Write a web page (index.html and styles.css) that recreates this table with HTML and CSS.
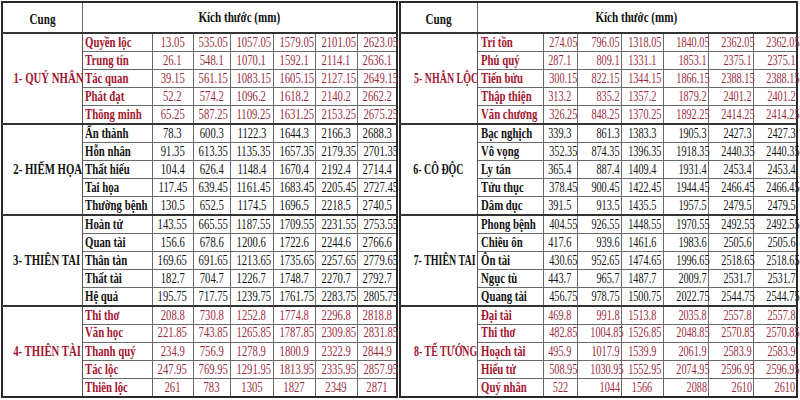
FILE: index.html
```html
<!DOCTYPE html>
<html lang="vi">
<head>
<meta charset="utf-8">
<title>Kích thước Lỗ Ban</title>
<link rel="stylesheet" href="styles.css">
</head>
<body>
<div class="sheet">
  <table class="tbl tbl-left">
    <colgroup>
      <col class="c-cung-l"><col class="c-name-l"><col class="c-n1-l"><col class="c-n2-l"><col class="c-n3-l"><col class="c-n4-l"><col class="c-n5-l"><col class="c-n6-l">
    </colgroup>
    <thead>
      <tr class="head">
        <th class="h-cung"><span class="t">Cung</span></th>
        <th class="h-size" colspan="7"><span class="t">Kích thước (mm)</span></th>
      </tr>
    </thead>
    <tbody class="grp red">
      <tr><td class="cung" rowspan="5"><span class="t">1- QUÝ NHÂN</span></td><td class="name"><span class="t">Quyền lộc</span></td><td><span class="t">13.05</span></td><td><span class="t">535.05</span></td><td><span class="t">1057.05</span></td><td><span class="t">1579.05</span></td><td><span class="t">2101.05</span></td><td><span class="t">2623.05</span></td></tr>
      <tr><td class="name"><span class="t">Trung tín</span></td><td><span class="t">26.1</span></td><td><span class="t">548.1</span></td><td><span class="t">1070.1</span></td><td><span class="t">1592.1</span></td><td><span class="t">2114.1</span></td><td><span class="t">2636.1</span></td></tr>
      <tr><td class="name"><span class="t">Tác quan</span></td><td><span class="t">39.15</span></td><td><span class="t">561.15</span></td><td><span class="t">1083.15</span></td><td><span class="t">1605.15</span></td><td><span class="t">2127.15</span></td><td><span class="t">2649.15</span></td></tr>
      <tr><td class="name"><span class="t">Phát đạt</span></td><td><span class="t">52.2</span></td><td><span class="t">574.2</span></td><td><span class="t">1096.2</span></td><td><span class="t">1618.2</span></td><td><span class="t">2140.2</span></td><td><span class="t">2662.2</span></td></tr>
      <tr><td class="name"><span class="t">Thông minh</span></td><td><span class="t">65.25</span></td><td><span class="t">587.25</span></td><td><span class="t">1109.25</span></td><td><span class="t">1631.25</span></td><td><span class="t">2153.25</span></td><td><span class="t">2675.25</span></td></tr>
    </tbody>
    <tbody class="grp">
      <tr><td class="cung" rowspan="5"><span class="t">2- HIẾM HỌA</span></td><td class="name"><span class="t">Ấn thành</span></td><td><span class="t">78.3</span></td><td><span class="t">600.3</span></td><td><span class="t">1122.3</span></td><td><span class="t">1644.3</span></td><td><span class="t">2166.3</span></td><td><span class="t">2688.3</span></td></tr>
      <tr><td class="name"><span class="t">Hỗn nhân</span></td><td><span class="t">91.35</span></td><td><span class="t">613.35</span></td><td><span class="t">1135.35</span></td><td><span class="t">1657.35</span></td><td><span class="t">2179.35</span></td><td><span class="t">2701.35</span></td></tr>
      <tr><td class="name"><span class="t">Thất hiếu</span></td><td><span class="t">104.4</span></td><td><span class="t">626.4</span></td><td><span class="t">1148.4</span></td><td><span class="t">1670.4</span></td><td><span class="t">2192.4</span></td><td><span class="t">2714.4</span></td></tr>
      <tr><td class="name"><span class="t">Tai họa</span></td><td><span class="t">117.45</span></td><td><span class="t">639.45</span></td><td><span class="t">1161.45</span></td><td><span class="t">1683.45</span></td><td><span class="t">2205.45</span></td><td><span class="t">2727.45</span></td></tr>
      <tr><td class="name"><span class="t">Thường bệnh</span></td><td><span class="t">130.5</span></td><td><span class="t">652.5</span></td><td><span class="t">1174.5</span></td><td><span class="t">1696.5</span></td><td><span class="t">2218.5</span></td><td><span class="t">2740.5</span></td></tr>
    </tbody>
    <tbody class="grp">
      <tr><td class="cung" rowspan="5"><span class="t">3- THIÊN TAI</span></td><td class="name"><span class="t">Hoàn tử</span></td><td><span class="t">143.55</span></td><td><span class="t">665.55</span></td><td><span class="t">1187.55</span></td><td><span class="t">1709.55</span></td><td><span class="t">2231.55</span></td><td><span class="t">2753.55</span></td></tr>
      <tr><td class="name"><span class="t">Quan tài</span></td><td><span class="t">156.6</span></td><td><span class="t">678.6</span></td><td><span class="t">1200.6</span></td><td><span class="t">1722.6</span></td><td><span class="t">2244.6</span></td><td><span class="t">2766.6</span></td></tr>
      <tr><td class="name"><span class="t">Thân tàn</span></td><td><span class="t">169.65</span></td><td><span class="t">691.65</span></td><td><span class="t">1213.65</span></td><td><span class="t">1735.65</span></td><td><span class="t">2257.65</span></td><td><span class="t">2779.65</span></td></tr>
      <tr><td class="name"><span class="t">Thất tài</span></td><td><span class="t">182.7</span></td><td><span class="t">704.7</span></td><td><span class="t">1226.7</span></td><td><span class="t">1748.7</span></td><td><span class="t">2270.7</span></td><td><span class="t">2792.7</span></td></tr>
      <tr><td class="name"><span class="t">Hệ quả</span></td><td><span class="t">195.75</span></td><td><span class="t">717.75</span></td><td><span class="t">1239.75</span></td><td><span class="t">1761.75</span></td><td><span class="t">2283.75</span></td><td><span class="t">2805.75</span></td></tr>
    </tbody>
    <tbody class="grp red">
      <tr><td class="cung" rowspan="5"><span class="t">4- THIÊN TÀI</span></td><td class="name"><span class="t">Thi thơ</span></td><td><span class="t">208.8</span></td><td><span class="t">730.8</span></td><td><span class="t">1252.8</span></td><td><span class="t">1774.8</span></td><td><span class="t">2296.8</span></td><td><span class="t">2818.8</span></td></tr>
      <tr><td class="name"><span class="t">Văn học</span></td><td><span class="t">221.85</span></td><td><span class="t">743.85</span></td><td><span class="t">1265.85</span></td><td><span class="t">1787.85</span></td><td><span class="t">2309.85</span></td><td><span class="t">2831.85</span></td></tr>
      <tr><td class="name"><span class="t">Thanh quý</span></td><td><span class="t">234.9</span></td><td><span class="t">756.9</span></td><td><span class="t">1278.9</span></td><td><span class="t">1800.9</span></td><td><span class="t">2322.9</span></td><td><span class="t">2844.9</span></td></tr>
      <tr><td class="name"><span class="t">Tác lộc</span></td><td><span class="t">247.95</span></td><td><span class="t">769.95</span></td><td><span class="t">1291.95</span></td><td><span class="t">1813.95</span></td><td><span class="t">2335.95</span></td><td><span class="t">2857.95</span></td></tr>
      <tr><td class="name"><span class="t">Thiên lộc</span></td><td><span class="t">261</span></td><td><span class="t">783</span></td><td><span class="t">1305</span></td><td><span class="t">1827</span></td><td><span class="t">2349</span></td><td><span class="t">2871</span></td></tr>
    </tbody>
  </table>

  <table class="tbl tbl-right">
    <colgroup>
      <col class="c-cung-r"><col class="c-name-r"><col class="c-n1-r"><col class="c-n2-r"><col class="c-n3-r"><col class="c-n4-r"><col class="c-n5-r"><col class="c-n6-r">
    </colgroup>
    <thead>
      <tr class="head">
        <th class="h-cung"><span class="t">Cung</span></th>
        <th class="h-size" colspan="7"><span class="t">Kích thước (mm)</span></th>
      </tr>
    </thead>
    <tbody class="grp red">
      <tr><td class="cung" rowspan="5"><span class="t">5- NHÂN LỘC</span></td><td class="name"><span class="t">Trí tồn</span></td><td><span class="t">274.05</span></td><td class="r"><span class="t">796.05</span></td><td><span class="t">1318.05</span></td><td class="r"><span class="t">1840.05</span></td><td class="r"><span class="t">2362.05</span></td><td class="r"><span class="t">2362.05</span></td></tr>
      <tr><td class="name"><span class="t">Phú quý</span></td><td><span class="t">287.1</span></td><td class="r"><span class="t">809.1</span></td><td><span class="t">1331.1</span></td><td class="r"><span class="t">1853.1</span></td><td class="r"><span class="t">2375.1</span></td><td class="r"><span class="t">2375.1</span></td></tr>
      <tr><td class="name"><span class="t">Tiến bửu</span></td><td><span class="t">300.15</span></td><td class="r"><span class="t">822.15</span></td><td><span class="t">1344.15</span></td><td class="r"><span class="t">1866.15</span></td><td class="r"><span class="t">2388.15</span></td><td class="r"><span class="t">2388.15</span></td></tr>
      <tr><td class="name"><span class="t">Thập thiện</span></td><td><span class="t">313.2</span></td><td class="r"><span class="t">835.2</span></td><td><span class="t">1357.2</span></td><td class="r"><span class="t">1879.2</span></td><td class="r"><span class="t">2401.2</span></td><td class="r"><span class="t">2401.2</span></td></tr>
      <tr><td class="name"><span class="t">Văn chương</span></td><td><span class="t">326.25</span></td><td class="r"><span class="t">848.25</span></td><td><span class="t">1370.25</span></td><td class="r"><span class="t">1892.25</span></td><td class="r"><span class="t">2414.25</span></td><td class="r"><span class="t">2414.25</span></td></tr>
    </tbody>
    <tbody class="grp">
      <tr><td class="cung" rowspan="5"><span class="t">6- CÔ ĐỘC</span></td><td class="name"><span class="t">Bạc nghịch</span></td><td><span class="t">339.3</span></td><td class="r"><span class="t">861.3</span></td><td><span class="t">1383.3</span></td><td class="r"><span class="t">1905.3</span></td><td class="r"><span class="t">2427.3</span></td><td class="r"><span class="t">2427.3</span></td></tr>
      <tr><td class="name"><span class="t">Vô vọng</span></td><td><span class="t">352.35</span></td><td class="r"><span class="t">874.35</span></td><td><span class="t">1396.35</span></td><td class="r"><span class="t">1918.35</span></td><td class="r"><span class="t">2440.35</span></td><td class="r"><span class="t">2440.35</span></td></tr>
      <tr><td class="name"><span class="t">Ly tán</span></td><td><span class="t">365.4</span></td><td class="r"><span class="t">887.4</span></td><td><span class="t">1409.4</span></td><td class="r"><span class="t">1931.4</span></td><td class="r"><span class="t">2453.4</span></td><td class="r"><span class="t">2453.4</span></td></tr>
      <tr><td class="name"><span class="t">Tửu thục</span></td><td><span class="t">378.45</span></td><td class="r"><span class="t">900.45</span></td><td><span class="t">1422.45</span></td><td class="r"><span class="t">1944.45</span></td><td class="r"><span class="t">2466.45</span></td><td class="r"><span class="t">2466.45</span></td></tr>
      <tr><td class="name"><span class="t">Dâm dục</span></td><td><span class="t">391.5</span></td><td class="r"><span class="t">913.5</span></td><td><span class="t">1435.5</span></td><td class="r"><span class="t">1957.5</span></td><td class="r"><span class="t">2479.5</span></td><td class="r"><span class="t">2479.5</span></td></tr>
    </tbody>
    <tbody class="grp">
      <tr><td class="cung" rowspan="5"><span class="t">7- THIÊN TAI</span></td><td class="name"><span class="t">Phong bệnh</span></td><td><span class="t">404.55</span></td><td class="r"><span class="t">926.55</span></td><td><span class="t">1448.55</span></td><td class="r"><span class="t">1970.55</span></td><td class="r"><span class="t">2492.55</span></td><td class="r"><span class="t">2492.55</span></td></tr>
      <tr><td class="name"><span class="t">Chiêu ôn</span></td><td><span class="t">417.6</span></td><td class="r"><span class="t">939.6</span></td><td><span class="t">1461.6</span></td><td class="r"><span class="t">1983.6</span></td><td class="r"><span class="t">2505.6</span></td><td class="r"><span class="t">2505.6</span></td></tr>
      <tr><td class="name"><span class="t">Ôn tài</span></td><td><span class="t">430.65</span></td><td class="r"><span class="t">952.65</span></td><td><span class="t">1474.65</span></td><td class="r"><span class="t">1996.65</span></td><td class="r"><span class="t">2518.65</span></td><td class="r"><span class="t">2518.65</span></td></tr>
      <tr><td class="name"><span class="t">Ngục tù</span></td><td><span class="t">443.7</span></td><td class="r"><span class="t">965.7</span></td><td><span class="t">1487.7</span></td><td class="r"><span class="t">2009.7</span></td><td class="r"><span class="t">2531.7</span></td><td class="r"><span class="t">2531.7</span></td></tr>
      <tr><td class="name"><span class="t">Quang tài</span></td><td><span class="t">456.75</span></td><td class="r"><span class="t">978.75</span></td><td><span class="t">1500.75</span></td><td class="r"><span class="t">2022.75</span></td><td class="r"><span class="t">2544.75</span></td><td class="r"><span class="t">2544.75</span></td></tr>
    </tbody>
    <tbody class="grp red">
      <tr><td class="cung" rowspan="5"><span class="t">8- TỂ TƯỚNG</span></td><td class="name"><span class="t">Đại tài</span></td><td><span class="t">469.8</span></td><td class="r"><span class="t">991.8</span></td><td><span class="t">1513.8</span></td><td class="r"><span class="t">2035.8</span></td><td class="r"><span class="t">2557.8</span></td><td class="r"><span class="t">2557.8</span></td></tr>
      <tr><td class="name"><span class="t">Thi thơ</span></td><td><span class="t">482.85</span></td><td class="r"><span class="t">1004.85</span></td><td><span class="t">1526.85</span></td><td class="r"><span class="t">2048.85</span></td><td class="r"><span class="t">2570.85</span></td><td class="r"><span class="t">2570.85</span></td></tr>
      <tr><td class="name"><span class="t">Hoạch tài</span></td><td><span class="t">495.9</span></td><td class="r"><span class="t">1017.9</span></td><td><span class="t">1539.9</span></td><td class="r"><span class="t">2061.9</span></td><td class="r"><span class="t">2583.9</span></td><td class="r"><span class="t">2583.9</span></td></tr>
      <tr><td class="name"><span class="t">Hiếu tử</span></td><td><span class="t">508.95</span></td><td class="r"><span class="t">1030.95</span></td><td><span class="t">1552.95</span></td><td class="r"><span class="t">2074.95</span></td><td class="r"><span class="t">2596.95</span></td><td class="r"><span class="t">2596.95</span></td></tr>
      <tr><td class="name"><span class="t">Quý nhân</span></td><td><span class="t">522</span></td><td class="r"><span class="t">1044</span></td><td><span class="t">1566</span></td><td class="r"><span class="t">2088</span></td><td class="r"><span class="t">2610</span></td><td class="r"><span class="t">2610</span></td></tr>
    </tbody>
  </table>
</div>
</body>
</html>
```

FILE: styles.css
```css
html, body {
  margin: 0;
  padding: 0;
  background: #ffffff;
}

body {
  font-family: "Liberation Serif", "Times New Roman", serif;
  color: #111111;
  width: 800px;
  height: 400px;
  overflow: hidden;
}

.sheet {
  display: flex;
  align-items: flex-start;
  padding: 1px 2px 0 1px;
}

.tbl {
  border-collapse: collapse;
  table-layout: fixed;
  border: 2px solid #2a2a2a;
  background: #ffffff;
  font-family: "Liberation Serif", "Times New Roman", serif;
}

.tbl-left { width: 397px; }
.tbl-right { width: 399px; margin-left: 1px; }

.c-cung-l { width: 80px; }
.c-name-l { width: 70px; }
.c-n1-l { width: 41px; }
.c-n2-l { width: 37px; }
.c-n3-l { width: 43px; }
.c-n4-l { width: 42px; }
.c-n5-l { width: 42px; }
.c-n6-l { width: 40px; }

.c-cung-r { width: 77px; }
.c-name-r { width: 66px; }
.c-n1-r { width: 34px; }
.c-n2-r { width: 44px; }
.c-n3-r { width: 42px; }
.c-n4-r { width: 45px; }
.c-n5-r { width: 45px; }
.c-n6-r { width: 44px; }

th, td {
  border: 1px solid #6a6a6a;
  padding: 0;
  white-space: nowrap;
  overflow: visible;
  line-height: 12px;
}

.head {
  height: 31px;
}

.head th {
  font-size: 15px;
  font-weight: bold;
  color: #111111;
  border-bottom: 2px solid #333333;
}

.h-cung {
  text-align: center;
  vertical-align: middle;
  padding-top: 2px;
}

.h-size {
  text-align: center;
  vertical-align: top;
  padding-top: 6px;
}

.head .t { transform: scaleX(0.74); }

tbody tr {
  height: 18.2px;
}

td {
  font-size: 14px;
  text-align: center;
  vertical-align: middle;
}

.t {
  display: inline-block;
  vertical-align: middle;
  line-height: 12px;
  transform: scaleX(0.76);
  transform-origin: center;
}

.tbl-right td .t { transform: scaleX(0.73); }

.name {
  text-align: left;
  padding-left: 2px;
  font-weight: bold;
}

.tbl-right .name { padding-left: 3px; }

.tbl .name .t {
  transform: scaleX(0.77);
  transform-origin: left center;
}

.r { text-align: right; padding-right: 1px; }
.r .t { transform-origin: right center; }

.cung {
  font-weight: bold;
  text-align: center;
  border-right: 1px solid #555555;
}

.tbl-left .cung .t { transform: scaleX(0.77); }
.tbl-right .cung .t { transform: scaleX(0.71); }

.grp {
  border-top: 2px solid #333333;
}

.red td { color: #a3152f; }
.red td:not(.name):not(.cung) { color: #9a2a3c; }
```
